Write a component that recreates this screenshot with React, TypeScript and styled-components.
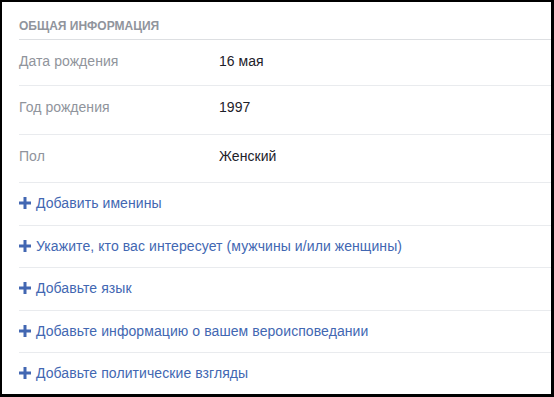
import styled, { createGlobalStyle } from "styled-components";

const GlobalStyle = createGlobalStyle`
  html, body {
    margin: 0;
    padding: 0;
    background: #000;
  }
  body {
    font-family: "Liberation Sans", Arial, sans-serif;
  }
`;

const infoRows = [
  { label: "Дата рождения", value: "16 мая", h: 45 },
  { label: "Год рождения", value: "1997", h: 48 },
  { label: "Пол", value: "Женский", h: 47 },
];

const addLinks = [
  { text: "Добавить именины", h: 42 },
  { text: "Укажите, кто вас интересует (мужчины и/или женщины)", h: 41 },
  { text: "Добавьте язык", h: 42 },
  { text: "Добавьте информацию о вашем вероисповедании", h: 41 },
  { text: "Добавьте политические взгляды", h: 41 },
];

function PlusIcon() {
  return (
    <PlusSvg viewBox="0 0 12 12">
      <rect x="4.5" y="0" width="3" height="12" />
      <rect x="0" y="4.5" width="12" height="3" />
    </PlusSvg>
  );
}

function App() {
  return (
    <Frame>
      <GlobalStyle />
      <Section>
        <Header>Общая информация</Header>
        {infoRows.map((row) => (
          <InfoRow key={row.label} $h={row.h}>
            <Label>{row.label}</Label>
            <Value>{row.value}</Value>
          </InfoRow>
        ))}
        {addLinks.map((link, i) => (
          <LinkRow key={link.text} $h={link.h} $last={i === addLinks.length - 1}>
            <AddLink href="#">
              <PlusIcon />
              {link.text}
            </AddLink>
          </LinkRow>
        ))}
      </Section>
    </Frame>
  );
}

export default App;

const Frame = styled.div`
  box-sizing: border-box;
  width: 554px;
  height: 397px;
  border-style: solid;
  border-color: #000;
  border-width: 2px 3px 3px 2px;
  background: #fff;
  overflow: hidden;
`;

const Section = styled.div`
  display: flex;
  flex-direction: column;
  padding-left: 17px;
`;

const Header = styled.div`
  height: 21px;
  padding-top: 16px;
  line-height: 16px;
  font-size: 12px;
  font-weight: bold;
  text-transform: uppercase;
  color: #90949c;
  border-bottom: 1px solid #dddfe2;
`;

const InfoRow = styled.div<{ $h: number }>`
  display: flex;
  align-items: flex-start;
  height: ${(p) => p.$h}px;
  border-bottom: 1px solid #e9ebee;
  font-size: 14px;
  line-height: 18px;
  letter-spacing: 0.05px;

  & > * {
    margin-top: 12px;
  }
`;

const Label = styled.div`
  width: 200px;
  flex-shrink: 0;
  color: #90949c;
`;

const Value = styled.div`
  color: #1d2129;
`;

const LinkRow = styled.div<{ $h: number; $last: boolean }>`
  display: flex;
  align-items: flex-start;
  height: ${(p) => p.$h}px;
  border-bottom: ${(p) => (p.$last ? "none" : "1px solid #e9ebee")};
  font-size: 14px;
  line-height: 18px;
  letter-spacing: 0.08px;
`;

const AddLink = styled.a`
  display: flex;
  align-items: center;
  gap: 5px;
  margin-top: 11px;
  color: #4267b2;
  text-decoration: none;
`;

const PlusSvg = styled.svg`
  width: 12px;
  height: 12px;
  fill: #4267b2;
  flex-shrink: 0;
`;
